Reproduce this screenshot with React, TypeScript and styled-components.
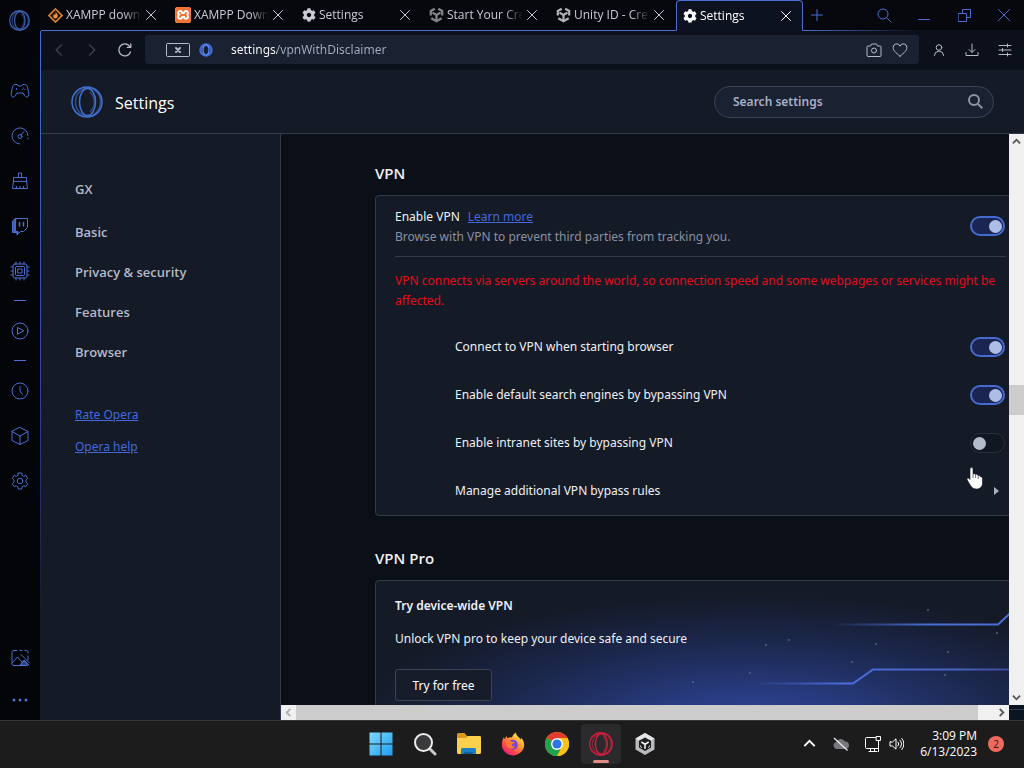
import React from "react";
import styled, { createGlobalStyle, css } from "styled-components";
import { FaCog } from "react-icons/fa";
import { SiXampp } from "react-icons/si";

const blue = "#4a6fd0";
const line = "#343a49";

const GlobalStyle = createGlobalStyle`
  * { box-sizing: border-box; }
  body { margin: 0; background: #05070b; }
  body, button, input { font-family: "Noto Sans", "Open Sans", sans-serif; font-size: 12px; }
  button { padding: 0; border: 0; background: none; color: inherit; cursor: pointer; }
  svg { display: block; flex: none; }
`;

/* ---------- layout ---------- */

const Desktop = styled.div`
  display: flex;
  flex-direction: column;
  height: 100vh;
  min-height: 600px;
  overflow: hidden;
`;

const BrowserWindow = styled.div`
  flex: 1;
  min-height: 0;
  display: flex;
  background: #05070b;
`;

const SideBar = styled.nav`
  width: 40px;
  flex: none;
  display: flex;
  flex-direction: column;
  background: #030508;
`;

const SideButton = styled.button<{ $tall?: boolean }>`
  width: 39px;
  height: ${(p) => (p.$tall ? 45 : 40)}px;
  display: flex;
  align-items: center;
  justify-content: center;
  color: ${blue};
`;

const SideTools = styled.div`
  flex: 1;
  padding-top: 28px;
`;

const SideRule = styled.hr`
  width: 12px;
  height: 1px;
  margin: 7px 14px;
  border: 0;
  background: ${blue};
`;

const Main = styled.div`
  flex: 1;
  min-width: 0;
  display: flex;
  flex-direction: column;
`;

/* ---------- tab strip ---------- */

const TabStrip = styled.div`
  display: flex;
  height: 31px;
  background: #06080d;
  padding-left: 1px;
`;

const Tab = styled.div<{ $active?: boolean }>`
  width: 127px;
  display: flex;
  align-items: center;
  padding: 0 8px 0 7px;
  color: #c9ccd4;
  border-bottom: 1px solid ${blue};
  ${(p) =>
    p.$active &&
    css`
      padding: 0 7px 0 6px;
      color: #fff;
      background: #0d1220;
      border: 1px solid ${blue};
      border-bottom-color: #0d1220;
      border-radius: 4px 4px 0 0;
    `}
`;

const TabTitle = styled.button`
  flex: 1;
  min-width: 0;
  display: flex;
  align-items: center;
  gap: 3px;
  text-align: left;
  font-family: "Open Sans", "Noto Sans", sans-serif;
`;

const TabLabel = styled.span`
  flex: 1;
  overflow: hidden;
  white-space: nowrap;
  line-height: 18px;
  mask-image: linear-gradient(90deg, #000 75%, transparent);
`;

const TabClose = styled.button`
  width: 18px;
  height: 18px;
  display: grid;
  place-items: center;
`;

const TabRest = styled.div`
  flex: 1;
  display: flex;
  align-items: center;
  justify-content: space-between;
  color: ${blue};
  border-bottom: 1px solid;
  border-image: linear-gradient(90deg, ${blue}, #0d1220 50%) 1;
`;

const NewTab = styled.button`
  width: 27px;
  height: 26px;
  display: grid;
  place-items: center;
`;

const WindowButtons = styled.div`
  display: flex;
`;

const WindowButton = styled.button`
  width: 40px;
  height: 30px;
  display: grid;
  place-items: center;
`;

/* ---------- address bar ---------- */

const Page = styled.div`
  flex: 1;
  min-height: 0;
  display: flex;
  flex-direction: column;
  border-left: 1px solid;
  border-image: linear-gradient(180deg, ${blue}, #37459a 50%, #141a28 85%) 1;
`;

const Toolbar = styled.div`
  display: flex;
  align-items: center;
  height: 39px;
  padding-bottom: 2px;
  background: #0c101a;
`;

const ToolButton = styled.button<{ $dim?: boolean }>`
  width: 33px;
  height: 30px;
  display: grid;
  place-items: center;
  color: ${(p) => (p.$dim ? "#3b4150" : "#b4bbcb")};
`;

const NavButtons = styled.div`
  display: flex;
  padding: 0 4px 0 1px;
`;

const AddressField = styled.div`
  flex: 1;
  display: flex;
  align-items: center;
  height: 29px;
  padding: 0 6px 0 21px;
  border-radius: 3px;
  background: #1a2131;
  color: #b4bbcb;
`;

const AddressInput = styled.input`
  flex: 1;
  min-width: 0;
  height: 24px;
  margin-left: 11px;
  padding: 0;
  border: 0;
  outline: 0;
  color: transparent;
  background: linear-gradient(90deg, #fff 46px, #a5adc0 46px);
  -webkit-background-clip: text;
  background-clip: text;
`;

const FieldButton = styled.button`
  width: 26px;
  height: 24px;
  display: grid;
  place-items: center;
`;

const MoreTools = styled.div`
  display: flex;
  padding: 0 3px;
`;

/* ---------- settings page ---------- */

const SettingsHeader = styled.header`
  display: flex;
  align-items: center;
  height: 64px;
  padding: 0 30px;
  background: #151a27;
  border-bottom: 1px solid ${line};
`;

const PageTitle = styled.h1`
  flex: 1;
  margin: 2px 12px 0;
  color: #fff;
  font-family: "Open Sans", "Noto Sans", sans-serif;
  font-size: 16px;
  line-height: 24px;
  font-weight: 400;
`;

const SearchBox = styled.label`
  width: 280px;
  height: 32px;
  display: flex;
  align-items: center;
  padding: 0 10px 0 18px;
  border: 1px solid #3b4253;
  border-radius: 16px;
  background: #1a2131;
  color: #8d94a5;
`;

const SearchInput = styled.input`
  flex: 1;
  min-width: 0;
  padding: 0;
  border: 0;
  outline: 0;
  background: none;
  font-weight: 600;
  color: #fff;
  &::placeholder { color: #a8b0c8; opacity: 1; }
`;

const SettingsBody = styled.div`
  flex: 1;
  min-height: 0;
  display: flex;
`;

const Menu = styled.nav`
  width: 240px;
  flex: none;
  display: flex;
  flex-direction: column;
  align-items: flex-start;
  padding: 35px 34px;
  background: #151a27;
  border-right: 1px solid ${line};
`;

const MenuItem = styled.a<{ $first?: boolean }>`
  line-height: 40px;
  margin-bottom: ${(p) => (p.$first ? 3 : 0)}px;
  font-family: "Open Sans", "Noto Sans", sans-serif;
  font-size: 13px;
  font-weight: 600;
  color: #b3b9c8;
  text-decoration: none;
`;

const MenuLinks = styled.div`
  display: flex;
  flex-direction: column;
  padding-top: 27px;
`;

const TextLink = styled.a`
  color: #4468dc;
  text-decoration: underline;
`;

const MenuLink = styled(TextLink)`
  line-height: 32px;
`;

const Viewport = styled.div`
  flex: 1;
  min-width: 0;
  display: grid;
  grid-template-columns: minmax(0, 1fr) 15px;
  grid-template-rows: minmax(0, 1fr) 15px;
`;

const Content = styled.main`
  overflow: hidden;
  padding: 27px 0 0 94px;
  background: #0b0f17;
  color: #eef0f5;
`;

const SectionTitle = styled.h2`
  margin: 0 0 10px;
  font-family: "Open Sans", "Noto Sans", sans-serif;
  font-size: 15px;
  line-height: 24px;
  font-weight: 600;
`;

const Card = styled.section`
  position: relative;
  margin: 0 -18px 30px 0;
  padding: 0 20px 0 19px;
  border: 1px solid ${line};
  border-radius: 4px;
  background: #151a27;
  line-height: 20px;
`;

const EnableRow = styled.div`
  display: flex;
  align-items: center;
  justify-content: space-between;
  height: 61px;
  padding-right: 1px;
  border-bottom: 1px solid ${line};
`;

const EnableText = styled.div`
  padding-top: 2px;
`;

const Description = styled.div`
  color: #8a90a0;
`;

const LearnMore = styled(TextLink)`
  margin-left: 8px;
`;

const Warning = styled.p`
  margin: 0;
  padding: 14px 0 12px;
  color: #e60a1c;
`;

const OptionRow = styled.div`
  display: flex;
  align-items: center;
  justify-content: space-between;
  height: 48px;
  padding: 0 1px 0 60px;
`;

const Toggle = styled.input`
  appearance: none;
  width: 35px;
  height: 20px;
  margin: 0;
  padding: 2px 0;
  display: flex;
  align-items: center;
  border: 1px solid #292f3d;
  border-radius: 10px;
  background: #111620;
  cursor: pointer;
  &::before {
    content: "";
    width: 13px;
    height: 13px;
    margin: 0 2px;
    border-radius: 50%;
    background: #b3bccd;
  }
  &:checked {
    justify-content: flex-end;
    border: 2px solid #456bd2;
    background: #1a2552;
  }
  &:checked::before { margin: 0 1px; background: #adbde6; }
`;

const RulesButton = styled.button`
  width: 18px;
  height: 24px;
  display: grid;
  place-items: center;
  color: #aab0c0;
`;

const PromoCard = styled(Card)`
  height: 146px;
  padding-top: 15px;
  background: radial-gradient(ellipse 400px 130px at 58% 100%, #2f4699 0%, #283b80 25%, #1b274c 65%, #151a27 100%) #151a27;
`;

const PromoArt = styled.svg`
  position: absolute;
  right: 15px;
  top: 0;
`;

const PromoTitle = styled.h3`
  margin: 0 0 13px;
  font-size: 12px;
  line-height: 20px;
  font-weight: 600;
`;

const PromoText = styled.p`
  margin: 0 0 20px;
`;

const TryButton = styled.button`
  position: relative;
  width: 97px;
  height: 32px;
  border: 1px solid #3d4353;
  border-radius: 3px;
  background: #171c2b;
  color: #fff;
`;

/* ---------- scroll bars ---------- */

const ScrollTrack = styled.div<{ $vertical?: boolean }>`
  display: flex;
  flex-direction: ${(p) => (p.$vertical ? "column" : "row")};
  justify-content: space-between;
  background: #f0f0f0;
  color: #555;
`;

const ScrollArrow = styled.button<{ $off?: boolean }>`
  width: 15px;
  height: 15px;
  display: grid;
  place-items: center;
  color: ${(p) => (p.$off ? "#b0b0b0" : "#555")};
`;

const ScrollThumb = styled.div<{ $vertical?: boolean }>`
  background: #cdcccc;
  ${(p) =>
    p.$vertical
      ? css`
          height: 30px;
        `
      : css`
          flex: 1;
          margin-right: 16px;
        `}
`;

const ScrollSpace = styled.div<{ $grow: number }>`
  flex: ${(p) => p.$grow};
`;

const Corner = styled.div`
  background: linear-gradient(180deg, #0a1220 4px, #2a3c50 4px, #2a3c50 5px, #0a1422 5px);
`;

/* ---------- taskbar ---------- */

const TaskBar = styled.footer`
  display: grid;
  grid-template-columns: 1fr auto 1fr;
  align-items: center;
  height: 48px;
  flex: none;
  padding-bottom: 2px;
  background: #1c1c1c;
  border-top: 1px solid #363636;
  color: #fff;
`;

const TaskApps = styled.div`
  grid-column: 2;
  display: flex;
  gap: 4px;
  padding-left: 2px;
`;

const TaskApp = styled.button<{ $active?: boolean }>`
  position: relative;
  width: 40px;
  height: 40px;
  display: grid;
  place-items: center;
  border-radius: 4px;
  ${(p) =>
    p.$active &&
    css`
      background: #2a2a2c;
      &::after {
        content: "";
        position: absolute;
        left: 12px;
        bottom: 1px;
        width: 16px;
        height: 3px;
        border-radius: 2px;
        background: #e58b85;
      }
    `}
`;

const Tray = styled.div`
  display: flex;
  align-items: center;
  justify-content: flex-end;
  padding-right: 20px;
`;

const TrayButton = styled.button<{ $narrow?: boolean }>`
  width: ${(p) => (p.$narrow ? 14 : 32)}px;
  height: 32px;
  display: grid;
  place-items: center;
`;

const Clock = styled.time`
  width: 74px;
  text-align: right;
  font-family: "Open Sans", "Noto Sans", sans-serif;
  font-size: 12px;
  line-height: 16px;
`;

const Badge = styled.span`
  width: 16px;
  height: 16px;
  margin-left: 11px;
  border-radius: 50%;
  background: #ee6a5f;
  color: #401714;
  font-size: 10px;
  line-height: 16px;
  text-align: center;
`;

const Pointer = styled.svg`
  position: absolute;
  right: 42px;
  bottom: 25px;
`;

/* ---------- icons ---------- */

type IconProps = { size?: number; w?: number; children: React.ReactNode; sw?: number };
const Icon = ({ size = 20, w, sw = 1, children }: IconProps) => (
  <svg
    width={w ?? size}
    height={size}
    viewBox={`0 0 ${w ?? size} ${size}`}
    fill="none"
    stroke="currentColor"
    strokeWidth={sw}
    strokeLinecap="round"
    strokeLinejoin="round"
    aria-hidden="true"
  >
    {children}
  </svg>
);

const OperaGX = ({ size, color = blue, sw = 1 }: { size: number; color?: string; sw?: number }) => (
  <svg width={size} height={size} viewBox="0 0 32 32" fill="none" stroke={color} strokeWidth={sw} aria-hidden="true">
    <circle cx="16" cy="16" r="15" />
    <ellipse cx="17" cy="16" rx="12.500" ry="14" opacity=".6" />
    <ellipse cx="16.500" cy="16" rx="8" ry="13.500" />
    <path d="M19 6c3 3 4.200 6.500 4.200 10s-1.200 7-4.200 10" opacity=".5" />
  </svg>
);

const Cross = ({ size = 11, sw = 1 }: { size?: number; sw?: number }) => (
  <Icon size={size} sw={sw}>
    <path d={`M.5.5L${size - 0.5} ${size - 0.5}M${size - 0.5}.5L.5 ${size - 0.5}`} />
  </Icon>
);

const Flame = () => (
  <svg width="15" height="15" viewBox="0 0 15 15" aria-hidden="true">
    <path d="M7.500 1L14 7.500 7.500 14 1 7.500z" fill="#1b0f06" stroke="#d9822f" strokeWidth="1.700" />
    <path d="M7.700 3.500c.3 1.700 2.300 2.400 2.100 4.600a2.300 2.300 0 0 1-4.600.1c0-1 .6-1.500.9-2.200.4.400.6.800.6 1.200.8-.9 1.200-2.200 1-3.700z" fill="#f0903a" />
  </svg>
);

const UnityCube = ({ color }: { color: string }) => (
  <svg width="15" height="16" viewBox="0 0 15 16" fill="none" stroke={color} strokeWidth="2.200" aria-hidden="true">
    <path d="M5.800 1.700L1.800 4v4.500M9.200 1.700L13.200 4v4.500M2.300 11.300l5.200 3 5.200-3" />
    <path d="M7.500 8v5.500M7.500 8L3.500 5.600M7.500 8l4-2.400" />
  </svg>
);

const XamppBadge = styled.span`
  width: 16px;
  height: 16px;
  flex: none;
  border-radius: 3px;
  overflow: hidden;
  background: #fff;
  color: #ef7134;
`;

const sideIcons: Record<string, React.ReactNode> = {
  "GX Corner": (
    <Icon>
      <path d="M5.500 3.500h2l1 1.500h3l1-1.500h2c2 0 2.800 1.200 3.200 3.500l1 5c.4 2.300-.4 4-1.800 4-1.200 0-1.800-.8-2.600-2l-1.300-2h-6l-1.300 2c-.8 1.200-1.400 2-2.600 2-1.400 0-2.200-1.700-1.800-4l1-5c.4-2.300 1.200-3.500 3.200-3.500z" />
      <path d="M6.500 7.500v1M13.500 7v.2M12.200 8.500h.2M14.800 8.500h.2" />
    </Icon>
  ),
  "GX Control": (
    <Icon>
      <path d="M9.500 17.900A8 8 0 1 1 18 9.500M18 12v1" />
      <circle cx="10" cy="10.500" r="2" />
      <path d="M11 9l3-3.500" />
    </Icon>
  ),
  "GX Cleaner": (
    <Icon>
      <path d="M8.500 6V2h3v4M3.500 10V6.500h13V10zM3.500 10l-1 7.500h15l-1-7.500M6.500 17.500v-2M10 17.500v-2M13.500 17.500v-2" />
    </Icon>
  ),
  Twitch: (
    <Icon>
      <path d="M5.500 2.500h12v9l-4 4h-3l-3 3v-3h-2z" />
      <path d="M5.500 2.500L2.500 5v11.500H7V19l1-1v-2.500H5.500z" fill="currentColor" fillOpacity=".8" />
      <path d="M9.500 6.500v3.500M13.500 6.500v3.500" strokeWidth="1.500" />
    </Icon>
  ),
  Limiters: (
    <Icon>
      <rect x="3" y="3" width="14" height="14" rx="2" />
      <rect x="5.500" y="5.500" width="9" height="9" rx="1" />
      <rect x="8" y="8" width="4" height="4" />
      <path d="M6 3V1M10 3V1M14 3V1M6 19v-2M10 19v-2M14 19v-2M3 6H1M3 10H1M3 14H1M19 6h-2M19 10h-2M19 14h-2" />
    </Icon>
  ),
  Player: (
    <Icon>
      <circle cx="10" cy="10" r="8" />
      <path d="M7.500 6.800v6.400l6-3.200z" />
    </Icon>
  ),
  History: (
    <Icon>
      <circle cx="10" cy="10" r="8" />
      <path d="M10 5.500V10l2.500 3.500" />
    </Icon>
  ),
  Extensions: (
    <Icon>
      <path d="M10 1.500l8 4v9l-8 4-8-4v-9zM2 5.500l8 4.500 8-4.500M10 10v8.500" />
    </Icon>
  ),
  Settings: (
    <Icon>
      <path d="M8.300 2h3.400l.5 2.400 1.500.8 2.300-.8 1.700 3-1.700 1.700v1.800l1.700 1.700-1.700 3-2.300-.8-1.500.8-.5 2.400H8.300l-.5-2.400-1.500-.8-2.300.8-1.700-3L4 10.900V9.100L2.300 7.400l1.700-3 2.300.8 1.500-.8z" />
      <circle cx="10" cy="10" r="2.800" />
    </Icon>
  ),
  Pinboards: (
    <Icon>
      <path d="M7 2.500H4a2 2 0 0 0-2 2v11a2 2 0 0 0 2 2h12.500M18 12V8M18 5V4a1.500 1.500 0 0 0-1.500-1.500H15M10 2.500h2M2 15l5.500-6L12 14M10 17l4-5 5 5M11 6.500l4 4 4.500 4.500" />
      <path d="M10.500 17l3.500-4 3.500 4z" fill="currentColor" fillOpacity=".5" />
    </Icon>
  ),
  More: (
    <svg width="20" height="20" fill="currentColor" aria-hidden="true">
      <circle cx="4" cy="10" r="1.500" />
      <circle cx="10" cy="10" r="1.500" />
      <circle cx="16" cy="10" r="1.500" />
    </svg>
  ),
};

const SideItem = ({ name, tall }: { name: string; tall?: boolean }) => (
  <SideButton $tall={tall} aria-label={name}>
    {sideIcons[name]}
  </SideButton>
);

const Magnifier = ({ size = 15, sw = 1 }: { size?: number; sw?: number }) => (
  <svg width={size} height={size} viewBox="0 0 15 15" fill="none" stroke="currentColor" strokeWidth={sw} aria-hidden="true">
    <circle cx="6" cy="6" r="5" />
    <path d="M9.600 9.600L14.300 14.300" />
  </svg>
);

const Chevron = ({ dir, size = 9, sw = 2 }: { dir: "up" | "down" | "left" | "right"; size?: number; sw?: number }) => {
  const turn = { up: 0, right: 90, down: 180, left: 270 }[dir];
  return (
    <svg width={size} height={size} viewBox="0 0 10 10" fill="none" stroke="currentColor" strokeWidth={sw} aria-hidden="true">
      <path d="M1 7l4-4 4 4" transform={`rotate(${turn} 5 5)`} />
    </svg>
  );
};

const WindowsLogo = () => (
  <svg width="24" height="24" aria-hidden="true">
    <defs>
      <linearGradient id="win" x1="0" y1="0" x2="24" y2="24" gradientUnits="userSpaceOnUse">
        <stop stopColor="#7fdcff" />
        <stop offset="1" stopColor="#1c9cf0" />
      </linearGradient>
    </defs>
    <path d="M.5.5h11v11H.5zM12.500.5h11v11h-11zM.5 12.500h11v11H.5zM12.500 12.500h11v11h-11z" fill="url(#win)" />
  </svg>
);

const TaskSearch = () => (
  <svg width="24" height="24" fill="none" aria-hidden="true">
    <path d="M16.500 16.500L22 22" stroke="#c9c9c9" strokeWidth="3" strokeLinecap="round" />
    <circle cx="10.500" cy="10.500" r="8.500" fill="#3a3a3c" stroke="#ececec" strokeWidth="2" />
  </svg>
);

const Folder = () => (
  <svg width="26" height="24" aria-hidden="true">
    <path d="M1 2.500a1.500 1.500 0 0 1 1.500-1.500h6l2.500 3h12.500A1.500 1.500 0 0 1 25 5.500V10H1z" fill="#d99a1c" />
    <path d="M1 6h9l2-2h11.500A1.500 1.500 0 0 1 25 5.500v15a1.500 1.500 0 0 1-1.500 1.500h-21A1.500 1.500 0 0 1 1 20.500z" fill="#fbd04c" />
    <path d="M5 22v-4.500A1.500 1.500 0 0 1 6.500 16h12a1.500 1.500 0 0 1 1.500 1.500V22z" fill="#1c7fc4" />
    <path d="M8 22v-2h9v2z" fill="#14609c" />
  </svg>
);

const Firefox = () => (
  <svg width="24" height="24" viewBox="0 0 24 24" aria-hidden="true">
    <defs>
      <linearGradient id="fx" x1="20" y1="2" x2="5" y2="22" gradientUnits="userSpaceOnUse">
        <stop stopColor="#fff04f" />
        <stop offset=".4" stopColor="#ff9a2e" />
        <stop offset=".75" stopColor="#ff4550" />
        <stop offset="1" stopColor="#e8207a" />
      </linearGradient>
    </defs>
    <path d="M12 23.500A11.200 11.200 0 0 1 .8 12.500c0-3 1-5.500 2.200-7.500l.6 2.200 2-3.200.8 2.200c1.400-.8 3-1 4.600-.7C11.500 3.500 13 1.500 15 .5c0 2 1 3.300 2.500 4.500 1 .8 1.700 1.700 2.200 2.700l.3-2c2 2 3.200 4.500 3.200 7A11.200 11.200 0 0 1 12 23.500z" fill="url(#fx)" />
    <circle cx="11.800" cy="12.800" r="5" fill="#7a45d8" />
    <path d="M5 9.500c2-1.500 4.500-.8 6 .3l2.800.3c-.3 1.600-2.800 1.300-3 2.800 0 1.200 1.700 2 3.400 1.300-1 2.500-4.400 3.300-6.700 1.500C5.500 14.200 5 11.500 5 9.500z" fill="#ff7a2a" />
  </svg>
);

const Chrome = () => (
  <svg width="24" height="24" viewBox="0 0 24 24" aria-hidden="true">
    <circle cx="12" cy="12" r="12" fill="#fbc116" />
    <path d="M12 12L1.600 6A12 12 0 0 1 22.400 6z" fill="#e33b2e" />
    <path d="M1.600 6A12 12 0 0 0 12 24l5-9-5-3z" fill="#1fa24b" />
    <path d="M12 6h10.400A12 12 0 0 1 12 24l5.200-9z" fill="#fbc116" />
    <circle cx="12" cy="12" r="6" fill="#fff" />
    <circle cx="12" cy="12" r="4.600" fill="#2f74e6" />
  </svg>
);

const UnityHub = () => (
  <svg width="22" height="24" viewBox="0 0 22 24" aria-hidden="true">
    <path d="M11 1l9.500 5.500v11L11 23l-9.500-5.500v-11z" fill="#b9bbbe" />
    <path d="M11 1l9.500 5.500L11 12 1.500 6.500z" fill="#e4e5e7" />
    <path d="M11 5.500l6 3.300v6.700l-6 3.500-6-3.500V8.800z" fill="#1c1d1f" />
    <path d="M11 12.200v4.500M11 12.200L7.300 10M11 12.200l3.700-2.200" stroke="#f2f2f2" strokeWidth="1.600" />
    <path d="M6.500 13.500v1.200l1.500.9M15.500 13.500v1.200l-1.500.9" stroke="#d8d8d8" fill="none" />
  </svg>
);

/* ---------- data ---------- */

const tabs = [
  { title: "XAMPP downl", icon: <Flame /> },
  { title: "XAMPP Downl", icon: <XamppBadge><SiXampp size={16} /></XamppBadge> },
  { title: "Settings", icon: <FaCog size={14} /> },
  { title: "Start Your Crea", icon: <UnityCube color="#83858b" /> },
  { title: "Unity ID - Crea", icon: <UnityCube color="#b0b2b8" /> },
  { title: "Settings", icon: <FaCog size={14} />, active: true },
];

const menu = ["GX", "Basic", "Privacy & security", "Features", "Browser"];

const options = [
  { id: "start", label: "Connect to VPN when starting browser", on: true },
  { id: "engines", label: "Enable default search engines by bypassing VPN", on: true },
  { id: "intranet", label: "Enable intranet sites by bypassing VPN", on: false },
];

const stars = [
  [247, 29], [316, 52], [85, 64], [108, 59], [195, 63], [267, 71], [171, 81], [69, 92], [264, 94], [12, 101],
];

/* ---------- app ---------- */

export default function App() {
  return (
    <Desktop>
      <GlobalStyle />
      <BrowserWindow>
        <SideBar aria-label="Sidebar">
          <SideButton aria-label="Opera menu">
            <OperaGX size={21} sw={1.8} color="#3f62b8" />
          </SideButton>
          <SideTools>
            {["GX Corner", "GX Control", "GX Cleaner", "Twitch", "Limiters"].map((n) => (
              <SideItem key={n} name={n} tall />
            ))}
            <SideRule />
            <SideItem name="Player" tall />
            <SideRule />
            {["History", "Extensions", "Settings"].map((n) => (
              <SideItem key={n} name={n} tall />
            ))}
          </SideTools>
          <SideItem name="Pinboards" tall />
          <SideItem name="More" />
        </SideBar>

        <Main>
          <TabStrip>
            {tabs.map((t, i) => (
              <Tab key={i} $active={t.active}>
                <TabTitle>
                  {t.icon}
                  <TabLabel>{t.title}</TabLabel>
                </TabTitle>
                <TabClose aria-label="Close tab">
                  <Cross size={10} />
                </TabClose>
              </Tab>
            ))}
            <TabRest>
              <NewTab aria-label="New tab">
                <Icon size={12}>
                  <path d="M6 .5v11M.5 6h11" />
                </Icon>
              </NewTab>
              <WindowButtons>
                <WindowButton aria-label="Search tabs"><Magnifier /></WindowButton>
                <WindowButton aria-label="Minimize">
                  <Icon size={12}><path d="M.5 10.500h11" /></Icon>
                </WindowButton>
                <WindowButton aria-label="Restore">
                  <Icon size={13}><path d="M.5 4.500h8v8h-8zM4.500 4.500v-4h8v8h-4" /></Icon>
                </WindowButton>
                <WindowButton aria-label="Close"><Cross size={12} /></WindowButton>
              </WindowButtons>
            </TabRest>
          </TabStrip>

          <Page>
            <Toolbar>
              <NavButtons>
                <ToolButton $dim aria-label="Back"><Chevron dir="left" size={14} sw={1} /></ToolButton>
                <ToolButton $dim aria-label="Forward"><Chevron dir="right" size={14} sw={1} /></ToolButton>
                <ToolButton aria-label="Reload">
                  <Icon size={14} sw={1.3}>
                    <path d="M12.500 9A6 6 0 1 1 11.800 3.500M12.800.8v3.500H9.300" />
                  </Icon>
                </ToolButton>
              </NavButtons>
              <AddressField>
                <Icon w={24} size={14}>
                  <rect x=".5" y=".5" width="23" height="13" rx="1" />
                  <path d="M10 5l4 4M14 5l-4 4" strokeWidth="2" />
                </Icon>
                <svg width="30" height="14" viewBox="0 0 30 14" fill="none" aria-hidden="true">
                  <circle cx="16" cy="7" r="5.500" stroke="#4468d0" strokeWidth="2.500" />
                  <path d="M16 1.500c-4 2-4 9 0 11M16 1.500c4 2 4 9 0 11" stroke="#5f8cf5" strokeWidth="1.300" />
                </svg>
                <AddressInput aria-label="Address" defaultValue="settings/vpnWithDisclaimer" />
                <FieldButton aria-label="Snapshot">
                  <Icon w={16} size={14}>
                    <path d="M1 4a1 1 0 0 1 1-1h2.500l1-2h5l1 2H14a1 1 0 0 1 1 1v8.500a1 1 0 0 1-1 1H2a1 1 0 0 1-1-1z" />
                    <circle cx="8" cy="7.500" r="2.500" />
                  </Icon>
                </FieldButton>
                <FieldButton aria-label="Bookmark">
                  <Icon w={16} size={14}>
                    <path d="M8 13.200C3.500 9.500 1.200 7.500 1.200 4.700A3.500 3.500 0 0 1 8 3.200a3.500 3.500 0 0 1 6.800 1.500C14.800 7.500 12.500 9.500 8 13.200z" />
                  </Icon>
                </FieldButton>
              </AddressField>
              <MoreTools>
                <ToolButton aria-label="Profile">
                  <Icon size={14}>
                    <circle cx="7" cy="4.500" r="2.800" />
                    <path d="M2.500 12.500l1-3 3.500-1.500 3.500 1.500 1 3" />
                  </Icon>
                </ToolButton>
                <ToolButton aria-label="Downloads">
                  <Icon size={14}>
                    <path d="M7 1v8M4 6.500l3 3 3-3M1 9.500v3h12v-3" />
                  </Icon>
                </ToolButton>
                <ToolButton aria-label="Easy setup">
                  <Icon size={14}>
                    <path d="M1 2.500h12M1 7h12M1 11.500h12M9.500 1v3M4.500 5.500v3M9.500 10v3" />
                  </Icon>
                </ToolButton>
              </MoreTools>
            </Toolbar>

            <SettingsHeader>
              <OperaGX size={32} sw={1.5} color="#4272d0" />
              <PageTitle>Settings</PageTitle>
              <SearchBox>
                <SearchInput type="search" aria-label="Search settings" placeholder="Search settings" />
                <Magnifier sw={2} />
              </SearchBox>
            </SettingsHeader>

            <SettingsBody>
              <Menu aria-label="Settings sections">
                {menu.map((m, i) => (
                  <MenuItem key={m} href="#" $first={i === 0}>{m}</MenuItem>
                ))}
                <MenuLinks>
                  <MenuLink href="#">Rate Opera</MenuLink>
                  <MenuLink href="#">Opera help</MenuLink>
                </MenuLinks>
              </Menu>

              <Viewport>
                <Content>
                  <SectionTitle>VPN</SectionTitle>
                  <Card>
                    <EnableRow>
                      <EnableText>
                        <label htmlFor="vpn">Enable VPN</label>
                        <LearnMore href="#">Learn more</LearnMore>
                        <Description>Browse with VPN to prevent third parties from tracking you.</Description>
                      </EnableText>
                      <Toggle id="vpn" type="checkbox" role="switch" defaultChecked />
                    </EnableRow>
                    <Warning>
                      VPN connects via servers around the world, so connection speed and some webpages or services might be affected.
                    </Warning>
                    {options.map((o) => (
                      <OptionRow key={o.id}>
                        <label htmlFor={o.id}>{o.label}</label>
                        <Toggle id={o.id} type="checkbox" role="switch" defaultChecked={o.on} />
                      </OptionRow>
                    ))}
                    <OptionRow>
                      <span>Manage additional VPN bypass rules</span>
                      <RulesButton aria-label="Manage additional VPN bypass rules">
                        <svg width="5" height="8" aria-hidden="true"><path d="M0 0l5 4-5 4z" fill="currentColor" /></svg>
                      </RulesButton>
                    </OptionRow>
                    <Pointer width="18" height="24" viewBox="0 0 18 24" aria-hidden="true">
                      <path
                        d="M5.500 1.500c1 0 1.500.6 1.500 1.500v5c.8-.5 2-.4 2.500.5 1-.4 2.200 0 2.500 1 1.200-.3 2.200.3 2.500 1.200 1.200 0 2 .7 2 2V17c0 3.500-2.300 6-6 6-3 0-4.500-1.200-6-3.500L1.200 14c-.8-1.300.8-2.700 2-1.500L4 13.500V3c0-.9.5-1.500 1.500-1.500z"
                        fill="#fff"
                        stroke="#0b0f17"
                        strokeWidth=".6"
                      />
                      <path d="M7 8v4M9.600 9v3M12.200 10v3" stroke="#3a3f4a" strokeWidth=".7" />
                    </Pointer>
                  </Card>

                  <SectionTitle>VPN Pro</SectionTitle>
                  <PromoCard>
                    <PromoArt width="330" height="125" fill="none" aria-hidden="true">
                      <defs>
                        <linearGradient id="fade1" x1="150" x2="316" gradientUnits="userSpaceOnUse">
                          <stop stopColor="#4a6fd8" stopOpacity="0" />
                          <stop offset=".6" stopColor="#4a6fd8" />
                        </linearGradient>
                        <linearGradient id="fade2" x1="74" x2="330" gradientUnits="userSpaceOnUse">
                          <stop stopColor="#4a6fd8" stopOpacity="0" />
                          <stop offset=".35" stopColor="#4a6fe0" />
                          <stop offset=".8" stopColor="#4a5fc0" />
                          <stop offset="1" stopColor="#3a4aa0" />
                        </linearGradient>
                      </defs>
                      <path d="M150 43.500h167l13-12" stroke="url(#fade1)" strokeWidth="2" />
                      <path d="M74 102.500h98l20-14h138" stroke="url(#fade2)" strokeWidth="2" />
                      {stars.map(([x, y]) => (
                        <circle key={`${x}-${y}`} cx={x} cy={y} r="1" fill="#55607e" />
                      ))}
                    </PromoArt>
                    <PromoTitle>Try device-wide VPN</PromoTitle>
                    <PromoText>Unlock VPN pro to keep your device safe and secure</PromoText>
                    <TryButton>Try for free</TryButton>
                  </PromoCard>
                </Content>

                <ScrollTrack $vertical>
                  <ScrollArrow aria-label="Scroll up"><Chevron dir="up" /></ScrollArrow>
                  <ScrollSpace $grow={236} />
                  <ScrollThumb $vertical />
                  <ScrollSpace $grow={275} />
                  <ScrollArrow aria-label="Scroll down"><Chevron dir="down" /></ScrollArrow>
                </ScrollTrack>
                <ScrollTrack>
                  <ScrollArrow $off aria-label="Scroll left"><Chevron dir="left" /></ScrollArrow>
                  <ScrollThumb />
                  <ScrollArrow aria-label="Scroll right"><Chevron dir="right" /></ScrollArrow>
                </ScrollTrack>
                <Corner />
              </Viewport>
            </SettingsBody>
          </Page>
        </Main>
      </BrowserWindow>

      <TaskBar>
        <TaskApps>
          <TaskApp aria-label="Start"><WindowsLogo /></TaskApp>
          <TaskApp aria-label="Search"><TaskSearch /></TaskApp>
          <TaskApp aria-label="File Explorer"><Folder /></TaskApp>
          <TaskApp aria-label="Firefox"><Firefox /></TaskApp>
          <TaskApp aria-label="Chrome"><Chrome /></TaskApp>
          <TaskApp $active aria-label="Opera GX"><OperaGX size={24} sw={1.8} color="#c8203f" /></TaskApp>
          <TaskApp aria-label="Unity Hub"><UnityHub /></TaskApp>
        </TaskApps>
        <Tray>
          <TrayButton aria-label="Show hidden icons"><Chevron dir="up" size={13} sw={1.5} /></TrayButton>
          <TrayButton aria-label="OneDrive">
            <svg width="18" height="14" viewBox="0 0 18 14" aria-hidden="true">
              <path d="M4.500 12A3.500 3.500 0 0 1 4 5.200 5 5 0 0 1 13 4.500 3.800 3.800 0 0 1 14 12z" fill="#77797d" />
              <path d="M2 1l13.500 12.500" stroke="#e8e8e8" strokeWidth="1.300" />
            </svg>
          </TrayButton>
          <TrayButton aria-label="Network">
            <Icon w={18} size={18}>
              <path d="M11.500 2.500h-9a1 1 0 0 0-1 1v9a1 1 0 0 0 1 1h12M5 16.500h8M6.500 13.500v3M10.500 13.500v3M12.500 1.500h4v4h-4zM14.500 5.500v11" />
            </Icon>
          </TrayButton>
          <TrayButton $narrow aria-label="Volume">
            <Icon w={15} size={14}>
              <path d="M1 5v4h2.500L7 12.200V1.800L3.500 5zM9 5a3 3 0 0 1 0 4M11 3.200a5.500 5.500 0 0 1 0 7.600M12.800 1.500a8 8 0 0 1 0 11" />
            </Icon>
          </TrayButton>
          <Clock>
            3:09 PM
            <br />
            6/13/2023
          </Clock>
          <Badge>2</Badge>
        </Tray>
      </TaskBar>
    </Desktop>
  );
}
